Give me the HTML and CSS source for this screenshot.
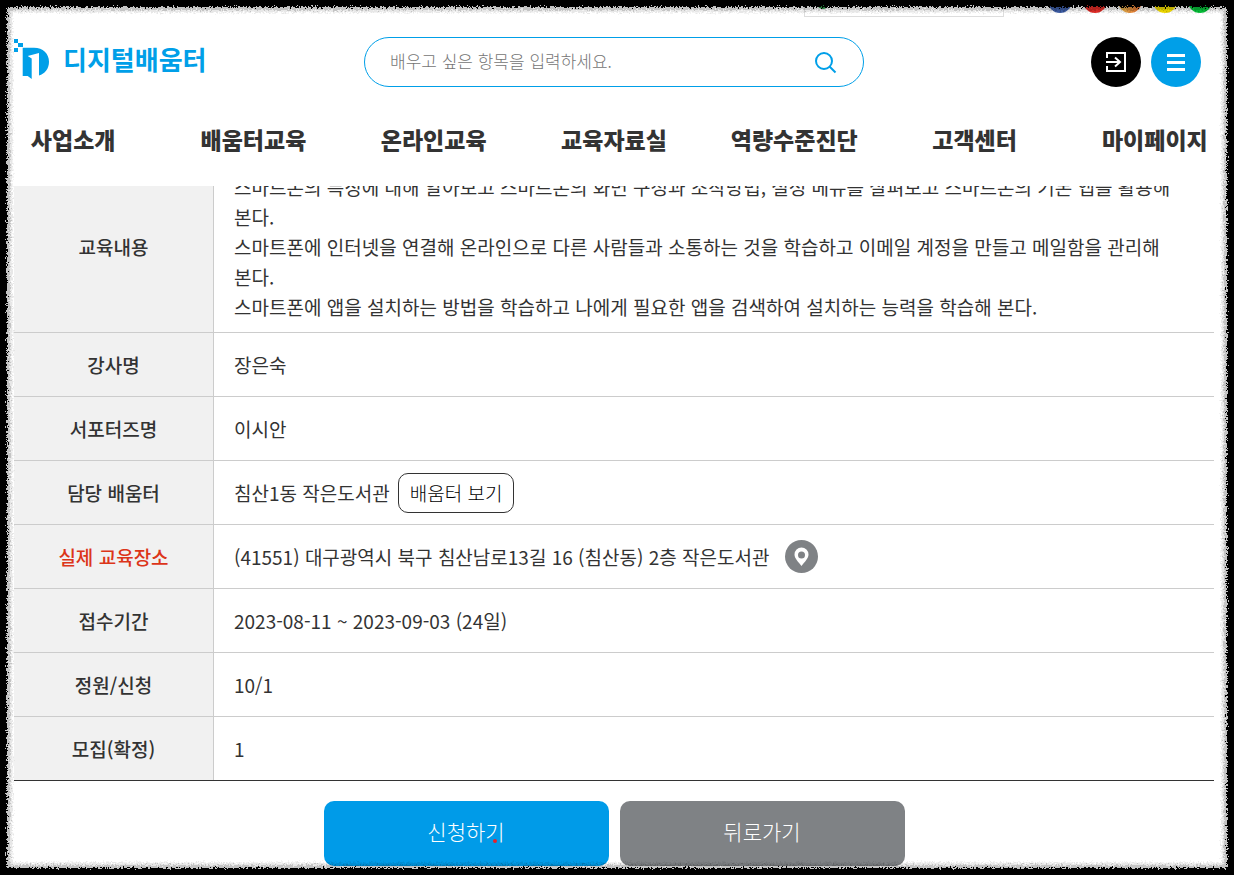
FILE: index.html
```html
<!DOCTYPE html>
<html lang="ko">
<head>
<meta charset="utf-8">
<title>디지털배움터</title>
<meta name="viewport" content="width=device-width, initial-scale=1">
<link rel="stylesheet" href="styles.css">
</head>
<body>
<div class="page">
  <header class="header">
    <div class="utility">
      <div class="utility-box"><span class="utility-mark"></span></div>
      <div class="social">
        <a class="dot dot-blue" href="#" aria-label="Facebook"></a>
        <a class="dot dot-red" href="#" aria-label="YouTube"></a>
        <a class="dot dot-orange" href="#" aria-label="Instagram"></a>
        <a class="dot dot-yellow" href="#" aria-label="Kakao"></a>
        <a class="dot dot-green" href="#" aria-label="Naver"></a>
      </div>
    </div>
    <div class="masthead">
      <a class="logo" href="#">
        <svg class="logo-mark" viewBox="0 0 36 40" aria-hidden="true">
          <path fill="#009fe8" d="M0 0h4v4H0zM4 4h5v4H4zM0 9h4v4H0zM8.700 8.700H20c9 0 15 6 15 14 0 7-4 12-10 13.800V14l-11.300 3 4 2.500V40l-4-3h-5z"/>
        </svg>
        <span class="logo-text">디지털배움터</span>
      </a>
      <form class="search">
        <input class="search-input" type="text" aria-label="검색" placeholder="배우고 싶은 항목을 입력하세요.">
        <button class="search-button" type="button" aria-label="검색">
          <svg viewBox="0 0 24 24" width="24" height="24" fill="none" stroke="#009fe8" stroke-width="2" aria-hidden="true"><circle cx="10" cy="11" r="8"/><path d="M15.500 16.500l6 6"/></svg>
        </button>
      </form>
      <div class="tools">
        <button class="tool tool-login" type="button" aria-label="로그인">
          <svg viewBox="0 0 22 22" width="22" height="22" fill="none" stroke="#fff" stroke-width="2" aria-hidden="true"><path d="M2 7V2h18v18H2v-5M1 11h13M10 6.500l5 4.500-5 4.500"/></svg>
        </button>
        <button class="tool tool-menu" type="button" aria-label="전체메뉴">
          <svg viewBox="0 0 18 18" width="18" height="18" fill="#fff" aria-hidden="true"><path d="M0 1h18v3H0zM0 8h18v3H0zM0 15h18v3H0z"/></svg>
        </button>
      </div>
    </div>
    <nav class="nav">
      <a href="#">사업소개</a>
      <a href="#">배움터교육</a>
      <a href="#">온라인교육</a>
      <a href="#">교육자료실</a>
      <a href="#">역량수준진단</a>
      <a href="#">고객센터</a>
      <a href="#">마이페이지</a>
    </nav>
  </header>
  <main class="content">
    <table class="detail">
      <tbody>
        <tr><th scope="row">교육내용</th><td class="description">스마트폰의 특징에 대해 알아보고 스마트폰의 화면 구성과 조작방법, 설정 메뉴를 살펴보고 스마트폰의 기본 앱을 활용해 본다.<br>스마트폰에 인터넷을 연결해 온라인으로 다른 사람들과 소통하는 것을 학습하고 이메일 계정을 만들고 메일함을 관리해 본다.<br>스마트폰에 앱을 설치하는 방법을 학습하고 나에게 필요한 앱을 검색하여 설치하는 능력을 학습해 본다.</td></tr>
        <tr><th scope="row">강사명</th><td>장은숙</td></tr>
        <tr><th scope="row">서포터즈명</th><td>이시안</td></tr>
        <tr><th scope="row">담당 배움터</th><td><div class="cell-row"><span>침산1동 작은도서관</span><button class="view-button" type="button">배움터 보기</button></div></td></tr>
        <tr><th scope="row" class="accent">실제 교육장소</th><td><div class="cell-row cell-place"><span>(41551) 대구광역시 북구 침산남로13길 16 (침산동) 2층 작은도서관</span><button class="pin" type="button" aria-label="지도 보기"><svg viewBox="0 0 33 33" width="33" height="33" aria-hidden="true"><circle cx="16.500" cy="16.500" r="16.500" fill="#7f8285"/><path fill="#fff" fill-rule="evenodd" d="M16.500 26c-3-4-7-7.500-7-11.500a7 7 0 0 1 14 0c0 4-4 7.500-7 11.500zm0-14.500a3.500 3.500 0 1 0 0 7 3.500 3.500 0 0 0 0-7z"/></svg></button></div></td></tr>
        <tr><th scope="row">접수기간</th><td>2023-08-11 ~ 2023-09-03 (24일)</td></tr>
        <tr><th scope="row">정원/신청</th><td>10/1</td></tr>
        <tr><th scope="row">모집(확정)</th><td>1</td></tr>
      </tbody>
    </table>
    <div class="actions">
      <button class="action action-apply" type="button">신청하기<span class="pointer-dot"></span></button>
      <button class="action action-back" type="button">뒤로가기</button>
    </div>
  </main>
</div>
<svg class="frame" aria-hidden="true">
  <defs>
    <filter id="rough" x="-2%" y="-2%" width="104%" height="104%">
      <feTurbulence type="fractalNoise" baseFrequency="0.6" numOctaves="2" seed="4" result="noise"/>
      <feDisplacementMap in="SourceGraphic" in2="noise" scale="7" xChannelSelector="R" yChannelSelector="G"/>
    </filter>
  </defs>
  <g filter="url(#rough)" fill="none">
    <rect class="frame-haze" width="100%" height="100%" rx="14"/>
    <rect class="frame-shade" width="100%" height="100%" rx="14"/>
    <rect class="frame-edge" width="100%" height="100%"/>
  </g>
</svg>
</body>
</html>
```
FILE: styles.css
```css
* { box-sizing: border-box; }
html { background: #fff; }
body {
  margin: 0;
  height: 100vh;
  overflow: hidden;
  background: #fff;
  color: #333;
  font: 400 19px/30px "Noto Sans CJK KR", "Noto Sans", sans-serif;
}
button, input { font: inherit; }
button { padding: 0; border: 0; cursor: pointer; }
a { color: inherit; text-decoration: none; }
.page {
  display: flex;
  flex-direction: column;
  height: 100%;
  padding: 0 20px 0 14px;
}
.header {
  position: relative;
  z-index: 1;
  flex: none;
  background: #fff;
}
.utility {
  display: flex;
  justify-content: flex-end;
  align-items: flex-end;
  gap: 44px;
  height: 17px;
  padding-right: 2px;
}
.utility-box {
  width: 200px;
  height: 17px;
  padding-left: 12px;
  border: 1px solid #ddd;
  border-top: 0;
}
.utility-mark {
  display: block;
  width: 12px;
  height: 9px;
  border-radius: 0 0 6px 6px;
  background: #2c9a45;
}
.social { display: flex; gap: 11px; padding-bottom: 4px; height: 17px; align-items: flex-end; }
.dot { width: 24px; height: 24px; border-radius: 50%; }
.dot-blue { background: #3e5fa9; }
.dot-red { background: #e52d27; }
.dot-orange { background: linear-gradient(100deg, #e8b04a 30%, #e8662e); }
.dot-yellow { background: #f8e100; }
.dot-green { background: #06c53a; }
.masthead {
  display: grid;
  grid-template-columns: 1fr 500px 1fr;
  align-items: center;
  height: 90px;
}
.logo { display: flex; align-items: center; gap: 13px; padding-bottom: 6px; }
.logo-mark { width: 36px; height: 40px; }
.logo-text { color: #009fe8; font-size: 26px; font-weight: 700; }
.search {
  display: flex;
  align-items: center;
  height: 50px;
  padding: 0 25px;
  border: 1px solid #009fe8;
  border-radius: 25px;
}
.search-input {
  flex: 1;
  min-width: 0;
  padding: 0 0 3px;
  border: 0;
  outline: 0;
  background: none;
  font-size: 17px;
  font-weight: 300;
}
.search-input::placeholder { color: #757575; opacity: 1; }
.search-button { display: flex; background: none; }
.tools { display: flex; justify-content: flex-end; gap: 10px; padding-right: 13px; }
.tool {
  display: flex;
  align-items: center;
  justify-content: center;
  width: 50px;
  height: 50px;
  border-radius: 50%;
}
.tool-login { background: #000; }
.tool-menu { background: #009fe8; }
.nav {
  display: grid;
  grid-template-columns: repeat(7, 1fr);
  height: 79px;
  margin: 0 -31px;
  padding-top: 17px;
  font-size: 23px;
  font-weight: 900;
  text-align: center;
}
.content { flex: 1; min-height: 0; }
.detail {
  width: 100%;
  margin-top: -24px;
  border-collapse: separate;
  border-spacing: 0;
  border-bottom: 1px solid #333;
}
.detail th, .detail td {
  height: 64px;
  padding: 10px 20px;
  border-bottom: 1px solid #ccc;
}
.detail tr:last-child > * { height: 63px; border-bottom: 0; }
.detail th {
  width: 200px;
  padding: 10px;
  border-right: 1px solid #ccc;
  background: #f1f1f1;
  font-weight: 500;
  text-align: center;
}
.detail .accent { color: #dc3519; }
.detail td { text-align: left; }
.detail .description { word-break: keep-all; }
.cell-row { display: flex; align-items: center; gap: 8px; }
.cell-place { gap: 16px; }
.view-button {
  height: 40px;
  padding: 0 11px;
  border: 1px solid #333;
  border-radius: 10px;
  background: #fff;
  color: #000;
  font-size: 19px;
  font-weight: 300;
}
.pin { display: flex; background: none; }
.actions {
  display: flex;
  justify-content: center;
  gap: 11px;
  padding-top: 20px;
}
.action {
  position: relative;
  width: 285px;
  height: 65px;
  padding-bottom: 5px;
  border-radius: 10px;
  color: #fff;
  font-size: 21px;
  font-weight: 300;
}
.action-apply { background: #009be8; }
.action-back { background: #7f8285; }
.pointer-dot {
  position: absolute;
  top: 38px;
  left: 169px;
  width: 4px;
  height: 4px;
  border-radius: 50%;
  background: #e8202a;
}
.frame {
  position: fixed;
  inset: 0;
  z-index: 2;
  width: 100%;
  height: 100%;
  pointer-events: none;
  mix-blend-mode: multiply;
}
.frame-haze { stroke: #ddd; stroke-opacity: 0.7; stroke-width: 25px; }
.frame-shade { stroke: #bbb; stroke-opacity: 0.8; stroke-width: 20px; }
.frame-edge { stroke: #000; stroke-width: 14px; }
```
